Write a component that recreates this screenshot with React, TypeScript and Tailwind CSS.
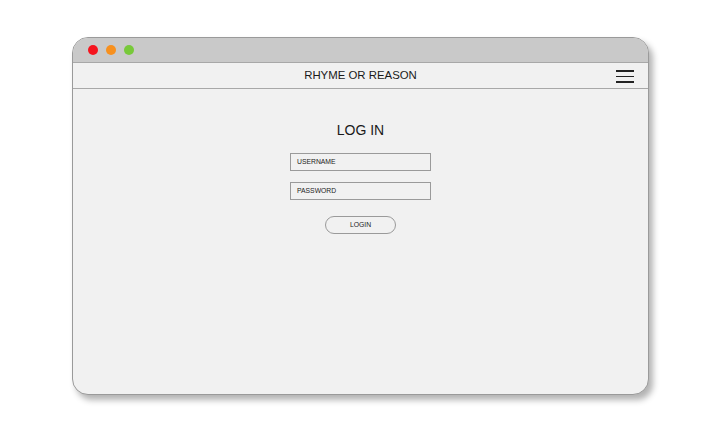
export default function App() {
  return (
    <div className="w-[720px] h-[432px] bg-white pt-[37px] pl-[72px]" style={{ fontFamily: '"Liberation Sans", Arial, sans-serif' }}>
      <div className="w-[577px] h-[358px] rounded-[16px] border border-[#9a9a9a] bg-[#f1f1f1] overflow-hidden shadow-[4px_5px_6px_rgba(0,0,0,0.3)] flex flex-col">
        <div className="h-[25px] bg-[#c9c9c9] border-b border-[#a8a8a8] flex items-center gap-[8px] pl-[15px] shrink-0">
          <div className="w-[10px] h-[10px] rounded-full bg-[#f5141e]" />
          <div className="w-[10px] h-[10px] rounded-full bg-[#f7901e]" />
          <div className="w-[10px] h-[10px] rounded-full bg-[#78c93a]" />
        </div>
        <div className="h-[26px] border-b border-[#a8a8a8] flex items-center justify-center relative shrink-0">
          <span className="text-[11.4px] text-[#1a1a1a] pt-[1px]">RHYME OR REASON</span>
          <div className="absolute right-[14px] top-[7px] w-[18px] flex flex-col gap-[4px]">
            <div className="h-[1.6px] bg-[#222]" />
            <div className="h-[1.6px] bg-[#222]" />
            <div className="h-[1.6px] bg-[#222]" />
          </div>
        </div>
        <div className="flex flex-col items-center pt-[31px]">
          <div className="text-[14px] leading-[20px] text-[#1a1a1a]">LOG IN</div>
          <div className="mt-[13px] w-[141px] h-[18px] border border-[#9a9a9a] flex items-center pl-[6px] text-[6.8px] text-[#222]">USERNAME</div>
          <div className="mt-[11px] w-[141px] h-[18px] border border-[#9a9a9a] flex items-center pl-[6px] text-[6.8px] text-[#222]">PASSWORD</div>
          <div className="mt-[16px] w-[71px] h-[18px] border border-[#9a9a9a] rounded-full flex items-center justify-center text-[6.8px] text-[#222]">LOGIN</div>
        </div>
      </div>
    </div>
  );
}
